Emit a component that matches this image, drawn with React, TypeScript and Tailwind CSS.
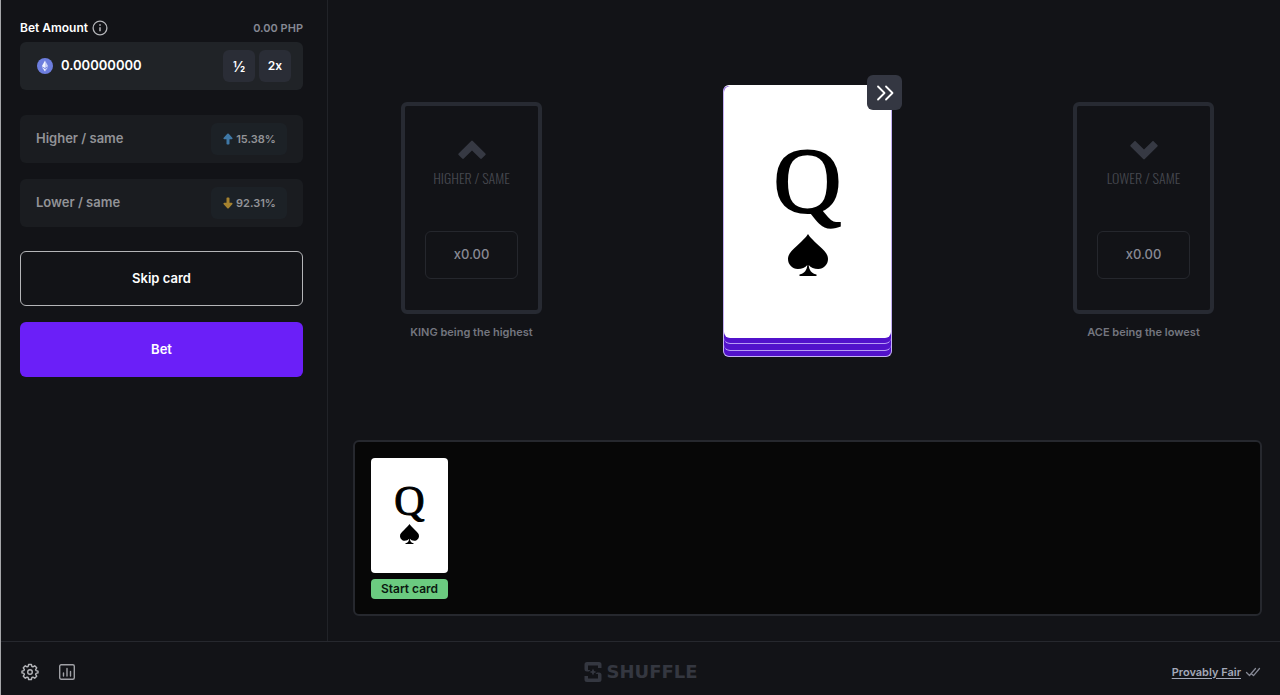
import clsx from "clsx";
import { useState } from "react";

const ROWS = [
  { id: "higher", label: "Higher / same", chance: "15.38%" },
  { id: "lower", label: "Lower / same", chance: "92.31%" }
] as const;

function InfoIcon(): React.ReactElement {
  return (
    <svg className="h-4 w-4" fill="none" stroke="#b4b5b9" strokeWidth="1.3" viewBox="0 0 16 16">
      <circle cx="8" cy="8" r="6.9" />
      <path d="M8 7.2v4" strokeWidth="1.5" />
      <path d="M8 4.3v1.5" strokeWidth="1.6" />
    </svg>
  );
}

function EthIcon(): React.ReactElement {
  return (
    <svg className="h-4 w-4 shrink-0" viewBox="0 0 16 16">
      <circle cx="8" cy="8" fill="#6d7ede" r="8" />
      <path d="M8 2.6 4.8 8.2 8 10.1Z" fill="#f1f3fd" />
      <path d="M8 2.6l3.2 5.6L8 10.1Z" fill="#c9d0f6" />
      <path d="M8 11 4.8 9.1 8 13.4Z" fill="#f1f3fd" />
      <path d="M8 11l3.2-1.9L8 13.4Z" fill="#c9d0f6" />
    </svg>
  );
}

function ArrowIcon({ down = false }: { down?: boolean }): React.ReactElement {
  return (
    <svg
      className={clsx("h-3 w-3", down ? "rotate-180 text-[#a5822f]" : "text-[#3f78a6]")}
      fill="currentColor"
      viewBox="0 0 12 12"
    >
      <path d="M5.3.8a1 1 0 0 1 1.4 0l3.6 3.9c.6.7.2 1.5-.7 1.5H7.500v4.600c0 .5-.3.8-.8.8H5.300c-.5 0-.8-.3-.8-.8V6.200H2.400c-.9 0-1.300-.8-.7-1.500Z" />
    </svg>
  );
}

function Spade({ className }: { className: string }): React.ReactElement {
  return (
    <svg className={className} fill="#000" viewBox="0 0 40 42">
      <path d="M20 0c1.500 2.600 5 6.300 11 11.800 5.500 5 9 8.200 9 13.200 0 5.600-4.400 10-9.800 10-4 0-7.500-1.500-9.500-4 .4 5 2.500 8.200 7.800 9.600V42h-17v-1.400c5.300-1.400 7.400-4.600 7.800-9.600-2 2.500-5.500 4-9.500 4C4.400 35 0 30.600 0 25c0-5 3.500-8.200 9-13.200C15 6.300 18.500 2.600 20 0Z" />
    </svg>
  );
}

function Chevron({ down = false }: { down?: boolean }): React.ReactElement {
  return (
    <svg
      className={clsx("h-5 w-7", down && "rotate-180")}
      fill="#363943"
      viewBox="0 0 28 20"
    >
      <path d="M13.200.9a1.200 1.200 0 0 1 1.600 0l12.600 12.500c.5.5.5 1 0 1.500l-3.600 3.700c-.5.500-1.100.500-1.600 0L14 10.500l-8.200 8.100c-.5.500-1.100.500-1.600 0L.6 14.900c-.5-.5-.5-1 0-1.500Z" />
    </svg>
  );
}

function GuessCard({
  direction,
  title,
  caption
}: {
  direction: "up" | "down";
  title: string;
  caption: string;
}): React.ReactElement {
  return (
    <div className="flex w-[141px] flex-col items-center">
      <div className="flex h-[212px] w-full flex-col items-center rounded-md border-4 border-[#272a32] pt-[34px]">
        <Chevron down={direction === "down"} />
        <span className="mt-2 font-['Oswald','Liberation_Sans_Narrow','Roboto_Condensed',sans-serif] text-[14px] leading-5 font-light whitespace-nowrap text-[#45474e]">
          {title}
        </span>
        <span className="mt-[43px] flex h-12 w-[93px] items-center justify-center rounded-md border border-[#25272d] text-[13px] font-medium text-[#888a94]">
          x0.00
        </span>
      </div>
      <p className="mt-[10px] text-[11px] leading-4 font-semibold whitespace-nowrap text-[#74767f]">
        {caption}
      </p>
    </div>
  );
}

function ShuffleLogo(): React.ReactElement {
  return (
    <div className="flex items-center gap-1 text-[#343740]">
      <svg className="h-5 w-[18px]" fill="currentColor" viewBox="0 0 18 20">
        <path d="M3 0h12a2.500 2.500 0 0 1 2.500 2.500V6H14V3.500H4V8h2.500L5 9.500H3A2.500 2.500 0 0 1 .5 7V2.500A2.500 2.500 0 0 1 3 0Z" />
        <path d="M15 20H3A2.500 2.500 0 0 1 .5 17.500V14H4v2.500h10V12h-2.500l1.500-1.500h2A2.500 2.500 0 0 1 17.500 13v4.500A2.500 2.500 0 0 1 15 20Z" />
        <path d="M9 6.500 10.100 8.900 12.500 10l-2.400 1.100L9 13.500l-1.100-2.400L5.500 10l2.400-1.100Z" />
      </svg>
      <span className="font-['DejaVu_Sans',sans-serif] text-[18px] leading-5 font-bold">SHUFFLE</span>
    </div>
  );
}

export default function App(): React.ReactElement {
  const [amount, setAmount] = useState("0.00000000");

  return (
    <div className="flex min-h-screen flex-col border-l border-[#a5a6a9] bg-[#121317] font-['Inter',sans-serif] text-white">
      <div className="flex flex-1">
        <aside className="w-[327px] shrink-0 border-r border-[#212328] pt-5 pr-6 pl-[19px]">
          <div className="flex h-4 items-center justify-between text-[12px]">
            <div className="flex items-center gap-1">
              <label className="font-semibold" htmlFor="bet-amount">
                Bet Amount
              </label>
              <InfoIcon />
            </div>
            <span className="text-[11px] font-semibold text-[#858893]">0.00 PHP</span>
          </div>

          <div className="mt-1.5 flex h-12 items-center gap-1 rounded-md bg-[#202327] pr-3 pl-[17px]">
            <EthIcon />
            <input
              className="ml-1 w-0 flex-1 bg-transparent text-[13px] font-semibold outline-none"
              id="bet-amount"
              onChange={(e) => setAmount(e.target.value)}
              type="text"
              value={amount}
            />
            <button className="h-8 w-8 rounded-md bg-[#2a2d36] text-[14px] font-semibold" type="button">
              ½
            </button>
            <button className="h-8 w-8 rounded-md bg-[#2a2d36] text-[12px] font-semibold" type="button">
              2x
            </button>
          </div>

          <div className="mt-[25px] flex flex-col gap-4">
            {ROWS.map((row) => (
              <button
                className="flex h-12 items-center justify-between rounded-md bg-[#1a1c20] px-4 text-[#929397]"
                disabled
                key={row.id}
                type="button"
              >
                <span className="text-[13px] font-semibold">{row.label}</span>
                <span className="flex h-8 w-[76px] items-center justify-center gap-0.5 rounded-md bg-[#1c2126] text-[11px] font-semibold">
                  <ArrowIcon down={row.id === "lower"} />
                  {row.chance}
                </span>
              </button>
            ))}
          </div>

          <div className="mt-6 flex flex-col gap-4 text-[13px] font-semibold">
            <button className="h-[55px] rounded-md border border-[#b4b5b8]" type="button">
              Skip card
            </button>
            <button className="h-[55px] rounded-md bg-[#6b1ff8]" type="button">
              Bet
            </button>
          </div>
        </aside>

        <main className="flex min-w-0 flex-1 flex-col pr-[18px] pb-[25px] pl-[25px]">
          <section className="flex flex-1 items-center justify-between px-12 pt-0.5">
            <GuessCard caption="KING being the highest" direction="up" title="HIGHER / SAME" />

            <div className="relative w-[169px] rounded-md border border-[#c4b0f5] border-t-white bg-[#5212cb]">
              <div className="rounded-md border-b border-[#b79cf5] pb-1.5">
                <div className="rounded-md border-b border-[#b79cf5] pb-[5px]">
                  <div className="flex h-[252px] flex-col items-center rounded-md bg-white pt-[48px] text-black">
                    <span className="font-['Liberation_Serif',serif] text-[94px] leading-[92px] [-webkit-text-stroke:2px_#000]">
                      Q
                    </span>
                    <Spade className="mt-2 h-[42px] w-10" />
                  </div>
                </div>
              </div>
              <div className="h-[5px]" />
              <button
                aria-label="Skip card"
                className="absolute -top-[11px] -right-[11px] flex h-[35px] w-[35px] items-center justify-center rounded-md bg-[#343742]"
                type="button"
              >
                <svg className="h-5 w-5" fill="none" stroke="#fff" strokeLinecap="round" strokeLinejoin="round" strokeWidth="1.8" viewBox="0 0 20 20">
                  <path d="m3 3.500 6.500 6.500L3 16.500M11 3.500l6.500 6.500-6.500 6.500" />
                </svg>
              </button>
            </div>

            <GuessCard caption="ACE being the lowest" direction="down" title="LOWER / SAME" />
          </section>

          <section className="h-[176px] rounded-md border-2 border-[#26282e] bg-[#070707] p-4">
            <div className="w-[77px]">
              <div className="flex h-[115px] flex-col items-center rounded-sm bg-white pt-[22px] text-black">
                <span className="font-['Liberation_Serif',serif] text-[42px] leading-[42px] [-webkit-text-stroke:1px_#000]">
                  Q
                </span>
                <Spade className="mt-0.5 h-5 w-[19px]" />
              </div>
              <p className="mt-1.5 rounded-sm bg-[#6bcb80] text-center text-[12px] leading-5 font-semibold text-[#0b1a10]">
                Start card
              </p>
            </div>
          </section>
        </main>
      </div>

      <footer className="grid h-[54px] grid-cols-3 items-center border-t border-[#26282e] pt-[7px] pr-[19px] pl-5">
        <div className="flex items-center gap-5">
          <button aria-label="Settings" type="button">
            <svg className="h-[18px] w-[18px]" fill="none" stroke="#b5b6ba" strokeLinejoin="round" strokeWidth="1.4" viewBox="0 0 18 18">
              <path d="M7.600 1.500h2.800l.5 2 1 .4 1.800-1.100 2 2-1.100 1.800.4 1 2 .5v1.800l-2 .5-.4 1 1.100 1.800-2 2-1.800-1.100-1 .4-.5 2H7.600l-.5-2-1-.4-1.800 1.100-2-2 1.100-1.800-.4-1-2-.5V8.100l2-.5.4-1-1.100-1.800 2-2 1.800 1.100 1-.4Z" />
              <circle cx="9" cy="9" r="2.300" />
            </svg>
          </button>
          <button aria-label="Statistics" type="button">
            <svg className="h-4 w-4" fill="none" stroke="#9fa0a5" strokeLinecap="round" strokeWidth="1.4" viewBox="0 0 16 16">
              <rect height="14.600" rx="1.500" width="14.600" x=".7" y=".7" />
              <path d="M4.500 9v3M8 4.500V12M11.500 7.500V12" />
            </svg>
          </button>
        </div>
        <div className="flex justify-center">
          <ShuffleLogo />
        </div>
        <div className="flex items-center justify-end gap-1">
          <a className="text-[11px] font-semibold text-[#a3a8b8] underline underline-offset-2" href="#fair">
            Provably Fair
          </a>
          <svg className="h-4 w-4" fill="none" stroke="#858894" strokeLinecap="round" strokeLinejoin="round" strokeWidth="1.300" viewBox="0 0 16 16">
            <path d="m1.500 8.500 3 3 6-7M7 10.200l1.500 1.400 6-7.100" />
          </svg>
        </div>
      </footer>
    </div>
  );
}
